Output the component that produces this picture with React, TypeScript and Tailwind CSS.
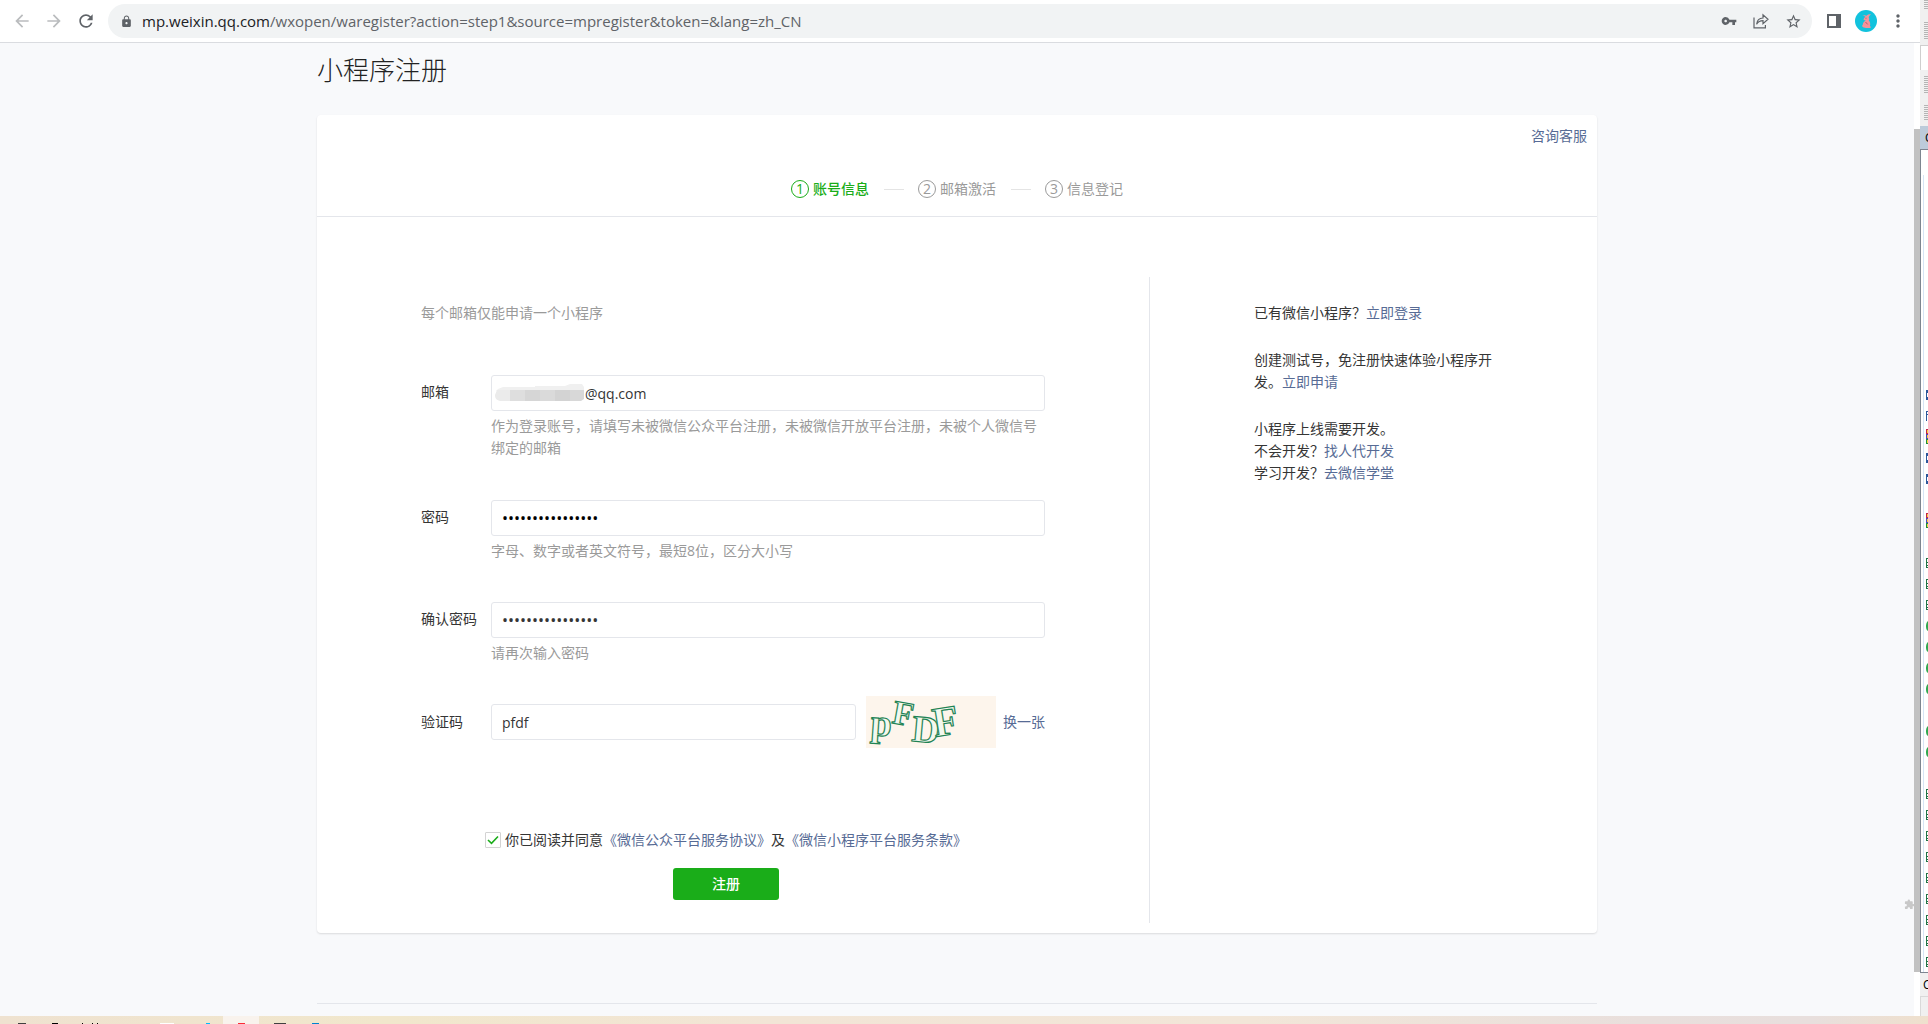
import React from 'react';
import {
  MdArrowBack,
  MdArrowForward,
  MdExtension,
  MdLock,
  MdMoreVert,
  MdRefresh,
  MdStarBorder,
  MdVpnKey,
} from 'react-icons/md';

const STEPS = ['账号信息', '邮箱激活', '信息登记'];

const TASKBAR_ITEMS = [
  'ml-[18px] w-2 bg-neutral-700',
  'ml-[26px] w-[6px] bg-black',
  'ml-6 w-px bg-black',
  'ml-[9px] w-px bg-black',
  'ml-1 w-px bg-black',
  'ml-[62px] w-[14px] bg-white',
  'ml-8 w-1 bg-sky-400',
];

// rows of the file list that peeks out behind the browser
const FILE_ROWS = [
  'word', 'doc', 'rar', 'word', 'word', '', 'rar', '',
  'sheet', 'sheet', 'sheet', 'disc', 'disc', 'disc', 'disc', '',
  'disc', 'disc', '', 'sheet', 'sheet', 'sheet', 'sheet', 'sheet',
  'sheet', 'sheet', 'sheet', 'sheet',
];

const Link: React.FC<{ children: React.ReactNode }> = ({ children }) => (
  <a href="#" className="text-[#576b95]">
    {children}
  </a>
);

const ShareIcon = () => (
  <svg width="16" height="16" viewBox="0 0 16 16" fill="none" stroke="#5f6368" strokeWidth="1.2" aria-hidden="true">
    <path d="M1 4.5v10.4h11.4v-3" />
    <path d="M3.6 11.2c.4-3.7 2.5-6 6.4-6.2V1.8l5 4.4-5 4.4V7.7c-2.9 0-4.8 1-6.4 3.5z" />
  </svg>
);

const SidePanelIcon = () => (
  <svg width="14" height="14" viewBox="0 0 14 14" aria-hidden="true">
    <path d="M0 0h14v14H0z" fill="#5f6368" />
    <path d="M2 2h7v10H2z" fill="#fff" />
  </svg>
);

const Avatar = () => (
  <svg width="22" height="22" viewBox="0 0 22 22" aria-hidden="true">
    <circle cx="11" cy="11" r="11" fill="#12c2dd" />
    <path
      d="M16 4.4c-1.8-.4-3.4 0-4.4 1.4-1.5-.8-3.2-.8-4.4-.1 1.5 0 2.7.4 3.3 1.1-1.3.9-2 2-1.9 2.9.9.7 1.8.8 2.6.6-1.8.9-3.3 2.5-3.5 4.6-.6.3-.8 1-.3 1.6.8 1 2 1.4 3.6 1.4h4.2c.9-.7.7-1.6-.3-2 .8-2.4.1-4.2-1.2-5.4.8-1 .8-2.1 0-3 .4-1.5 1.2-2.5 2.3-3.1z"
      fill="#f4939b"
    />
    <path d="M10.5 12l2.2 2.4M10.5 8.2h1" stroke="#b04a5e" strokeWidth=".8" />
  </svg>
);

const BrowserBar = () => (
  <header className="flex items-center border-b border-[#dadce0] bg-white py-1 text-[#5f6368]">
    <nav className="flex w-[108px] shrink-0 items-center gap-3 pl-3">
      <button type="button" aria-label="Back" className="text-[#babcbe]">
        <MdArrowBack size={20} />
      </button>
      <button type="button" aria-label="Forward" className="text-[#babcbe]">
        <MdArrowForward size={20} />
      </button>
      <button type="button" aria-label="Reload">
        <MdRefresh size={20} />
      </button>
    </nav>
    <div className="flex h-[34px] min-w-0 flex-1 items-center rounded-full bg-[#f1f3f4] pr-[10px] pl-3">
      <MdLock size={13} className="shrink-0" />
      <p className="ml-[9px] flex-1 truncate font-['Open_Sans','Noto_Sans_CJK_SC',sans-serif] text-[15px] leading-5">
        <span className="text-[#202124]">mp.weixin.qq.com</span>
        /wxopen/waregister?action=step1&amp;source=mpregister&amp;token=&amp;lang=zh_CN
      </p>
      <div className="flex items-center gap-4">
        <button type="button" aria-label="Passwords">
          <MdVpnKey size={16} />
        </button>
        <button type="button" aria-label="Share">
          <ShareIcon />
        </button>
        <button type="button" aria-label="Bookmark">
          <MdStarBorder size={17} />
        </button>
      </div>
    </div>
    <div className="flex items-center pr-3 pl-[15px]">
      <button type="button" aria-label="Side panel">
        <SidePanelIcon />
      </button>
      <button type="button" aria-label="Profile" className="ml-[14px]">
        <Avatar />
      </button>
      <button type="button" aria-label="Menu" className="ml-[11px]">
        <MdMoreVert size={20} />
      </button>
    </div>
  </header>
);

const StepNav = () => (
  <ol className="flex items-center justify-center">
    {STEPS.map((label, i) => (
      <li
        key={label}
        className={i === 0 ? 'flex items-center font-medium text-[#1aad19]' : 'flex items-center text-[#9a9a9a]'}
      >
        {i > 0 && <span className="mr-[14px] ml-[15px] h-px w-5 bg-[#e4e4e4]" />}
        <span className="mr-1 flex size-[18px] items-center justify-center rounded-full border border-current font-normal leading-4">
          {i + 1}
        </span>
        {label}
      </li>
    ))}
  </ol>
);

const INPUT = 'h-9 w-full rounded-[3px] border border-[#e4e6eb] bg-white px-[10px] outline-none';

const Field: React.FC<{
  id: string;
  label: string;
  help?: string;
  className: string;
  children: React.ReactNode;
}> = ({ id, label, help, className, children }) => (
  <div className={`flex ${className}`}>
    <label htmlFor={id} className="mt-[6px] w-[70px] shrink-0">
      {label}
    </label>
    <div className="min-w-0 flex-1">
      {children}
      {help && <p className="mt-1 text-[#9a9a9a]">{help}</p>}
    </div>
  </div>
);

const Smudge = () => (
  <svg width="90" height="18" viewBox="0 0 90 18" className="shrink-0" aria-hidden="true">
    <path d="M3 5L8 3h32V2h30l5-2h12l2 3v4H1z" fill="#f0f0f0" />
    <path d="M2 6h13v11H5c-4-1-5-3-5-6z" fill="#ebebeb" />
    <path d="M15 6h15v11H15z" fill="#dedede" />
    <path d="M30 6h15v11H30z" fill="#d6d6d6" />
    <path d="M45 6h15v11H45z" fill="#dadada" />
    <path d="M60 6h15v11H60z" fill="#d3d3d3" />
    <path d="M75 6h14v9l-3 2H75z" fill="#d8d8d8" />
  </svg>
);

const Captcha = () => (
  <svg
    width="130"
    height="52"
    viewBox="0 0 130 52"
    role="img"
    aria-label="pFDF"
    className="shrink-0 overflow-visible bg-[#fdf5ec] font-['Liberation_Serif',serif] font-bold"
    fill="#f3f8ee"
    stroke="#1f8354"
    strokeWidth="1.2"
  >
    <text x="4" y="39" fontSize="38" transform="rotate(4 4 39)">p</text>
    <text x="25" y="27" fontSize="34" transform="rotate(10 25 27)">F</text>
    <text x="45" y="45" fontSize="38" transform="rotate(5 45 45)">D</text>
    <text x="69" y="41" fontSize="42" transform="rotate(-9 69 41)">F</text>
  </svg>
);

const RegisterForm = () => (
  <form className="min-w-0 flex-1 px-[104px] pt-[25px] pb-[23px]" onSubmit={e => e.preventDefault()}>
    <p className="text-[#9a9a9a]">每个邮箱仅能申请一个小程序</p>
    <Field
      id="email"
      label="邮箱"
      className="mt-[51px]"
      help="作为登录账号，请填写未被微信公众平台注册，未被微信开放平台注册，未被个人微信号绑定的邮箱"
    >
      <div className="flex h-9 items-center rounded-[3px] border border-[#e4e6eb] bg-white pl-[3px]">
        <Smudge />
        <input id="email" defaultValue="@qq.com" className="h-full min-w-0 flex-1 bg-transparent outline-none" />
      </div>
    </Field>
    <Field id="password" label="密码" className="mt-[41px]" help="字母、数字或者英文符号，最短8位，区分大小写">
      <input id="password" type="password" defaultValue="weixin1234567890" className={`${INPUT} text-[16px] text-black`} />
    </Field>
    <Field id="confirm" label="确认密码" className="mt-10" help="请再次输入密码">
      <input id="confirm" type="password" defaultValue="weixin1234567890" className={`${INPUT} text-[16px]`} />
    </Field>
    <div className="mt-8 flex items-center">
      <label htmlFor="code" className="w-[70px] shrink-0">
        验证码
      </label>
      <div className="flex min-w-0 flex-1 items-center">
        <input id="code" defaultValue="pfdf" className={`${INPUT} mr-[10px] min-w-0 flex-1`} />
        <Captcha />
        <a href="#" className="ml-[7px] shrink-0 text-[#576b95]">
          换一张
        </a>
      </div>
    </div>
    <div className="mt-[81px] ml-16 w-fit">
      <div className="flex items-center">
        <input
          id="agree"
          type="checkbox"
          defaultChecked
          className="peer size-4 appearance-none rounded-[1px] border border-[#d3d3d3] bg-white"
        />
        {/* tick sits on top of the box */}
        <svg
          width="16"
          height="16"
          viewBox="0 0 16 16"
          className="pointer-events-none invisible -ml-4 peer-checked:visible"
          fill="none"
          stroke="#1aad19"
          strokeWidth="1.6"
          aria-hidden="true"
        >
          <path d="M3 8l3.5 3.3L13 4.5" />
        </svg>
        <p className="ml-1">
          <label htmlFor="agree">你已阅读并同意</label>
          <Link>《微信公众平台服务协议》</Link>及<Link>《微信小程序平台服务条款》</Link>
        </p>
      </div>
      <button type="submit" className="mx-auto mt-[17px] block h-8 w-[106px] rounded-[3px] bg-[#1aad19] font-medium text-white">
        注册
      </button>
    </div>
  </form>
);

const SideNotes = () => (
  <aside className="w-[448px] shrink-0 border-l border-[#e4e6eb] px-[104px] pt-[25px]">
    <p>
      已有微信小程序？<Link>立即登录</Link>
    </p>
    <p className="mt-[25px]">
      创建测试号，免注册快速体验小程序开发。<Link>立即申请</Link>
    </p>
    <p className="mt-[25px]">小程序上线需要开发。</p>
    <p>
      不会开发？<Link>找人代开发</Link>
    </p>
    <p>
      学习开发？<Link>去微信学堂</Link>
    </p>
  </aside>
);

const FileIcon: React.FC<{ kind: string }> = ({ kind }) => (
  <svg width="2" height="15" viewBox="0 0 2 15" aria-hidden="true">
    {kind === 'word' && <path d="M0 3h2v3H1v4h1v3H0z" fill="#2b579a" />}
    {kind === 'doc' && <path d="M0 3h2v1H1v2h1v1H1v6H0z" fill="#2b579a" />}
    {kind === 'sheet' && <path d="M0 3h2v1H1v3h1v1H1v2h1v1H1v1h1v1H0z" fill="#217346" />}
    {kind === 'disc' && <path d="M2 3C.5 4 0 6 0 8.5S.5 12 2 13z" fill="#2fa84f" />}
    {kind === 'rar' && (
      <>
        <path d="M0 0h2v5H0z" fill="#c0264a" />
        <path d="M0 5h2v5H0z" fill="#4a49b8" />
        <path d="M0 10h2v5H0z" fill="#1d8f3a" />
        <path d="M1 1h1v3H1zM1 6h1v3H1zM1 11h1v3H1z" fill="#f5d33b" />
      </>
    )}
  </svg>
);

const Grip: React.FC<{ className: string }> = ({ className }) => (
  <span
    className={`ml-1 block bg-[repeating-linear-gradient(#b4b4b4_0px,#b4b4b4_1px,#f0f0f0_1px,#f0f0f0_2px)] ${className}`}
  />
);

// slice of the desktop window to the right of the browser
const WindowEdge = () => (
  <div className="flex w-2 shrink-0 flex-col overflow-hidden bg-[#f0f0f0]">
    <Grip className="h-[10px]" />
    <Grip className="mt-3 h-[17px]" />
    <div className="mt-[6px] h-[25px] border-t border-l border-[#cfcfcf] bg-white" />
    <Grip className="mt-[6px] h-[17px]" />
    <Grip className="mt-3 h-[15px]" />
    <div className="mt-[6px] h-[23px] bg-[#bccbda] pl-[5px] text-[12px] leading-[23px] text-black">C</div>
    <div className="flex-1 border-t border-b border-l border-[#7d8590] bg-white pt-[25px]">
      <ul className="ml-[2px] border-l border-[#d6e5f5] pt-[209px] pl-[2px]">
        {FILE_ROWS.map((kind, i) => (
          <li key={i} className="flex h-[21px] items-center">
            <FileIcon kind={kind} />
          </li>
        ))}
      </ul>
    </div>
    <div className="h-[23px] pl-[3px] text-[12px] leading-[23px] text-black">C</div>
    <div className="h-5 border-t border-l border-[#d9d9d9]" />
  </div>
);

const Taskbar = () => (
  <footer className="flex h-2 items-end bg-[linear-gradient(90deg,#efe2d0,#f1e7cc_20%,#f2e5d6_40%,#f2e6d8_65%,#e9dfdc_85%,#e8dfdd_94%,#efe0cd)]">
    {TASKBAR_ITEMS.map(item => (
      <span key={item} className={`h-px ${item}`} />
    ))}
    <span className="ml-[13px] flex h-full w-9 items-end justify-center bg-[#f9f3ed]">
      <span className="h-px w-[7px] bg-red-500" />
    </span>
    <span className="ml-[15px] h-px w-3 bg-neutral-700" />
    <span className="ml-[26px] h-px w-[7px] bg-sky-600" />
  </footer>
);

export default function App() {
  return (
    <div className="flex min-h-screen flex-col bg-[#f8f9fb] font-['Open_Sans','Noto_Sans_CJK_SC',sans-serif] text-[14px] leading-[22px] text-[#353535]">
      <div className="flex flex-1">
        <div className="flex min-w-0 flex-1 flex-col">
          <BrowserBar />
          <div className="flex flex-1">
            <main className="min-w-0 flex-1">
              <div className="mx-auto max-w-[1280px] pt-[9px]">
                <h1 className="text-[26px] leading-9 font-light text-[#222]">小程序注册</h1>
                <section className="mt-[27px] rounded-[4px] bg-white shadow-[0_1px_2px_rgba(0,0,0,0.12)]">
                  <div className="border-b border-[#e4e6eb] px-[10px] pt-[10px] pb-[16px]">
                    <p className="text-right">
                      <Link>咨询客服</Link>
                    </p>
                    <div className="mt-[31px]">
                      <StepNav />
                    </div>
                  </div>
                  <div className="flex pt-[60px] pb-[10px]">
                    <RegisterForm />
                    <SideNotes />
                  </div>
                </section>
                <hr className="mt-[70px] border-[#e4e6eb]" />
              </div>
            </main>
            <div className="flex w-[6px] flex-col bg-white pt-[86px] pb-11">
              <div className="flex flex-1 items-end bg-[#c1c1c1]">
                <MdExtension size={11} className="mb-[62px] -ml-[10px] shrink-0 text-[#c8c8c8]" />
              </div>
            </div>
          </div>
        </div>
        <WindowEdge />
      </div>
      <Taskbar />
    </div>
  );
}
